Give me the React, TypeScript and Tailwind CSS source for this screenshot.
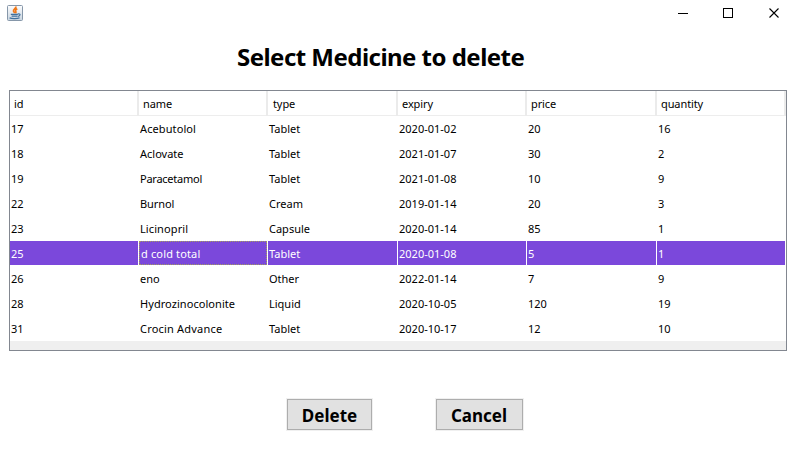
const columns = ["id", "name", "type", "expiry", "price", "quantity"];

const rows = [
  ["17", "Acebutolol", "Tablet", "2020-01-02", "20", "16"],
  ["18", "Aclovate", "Tablet", "2021-01-07", "30", "2"],
  ["19", "Paracetamol", "Tablet", "2021-01-08", "10", "9"],
  ["22", "Burnol", "Cream", "2019-01-14", "20", "3"],
  ["23", "Licinopril", "Capsule", "2020-01-14", "85", "1"],
  ["25", "d cold total", "Tablet", "2020-01-08", "5", "1"],
  ["26", "eno", "Other", "2022-01-14", "7", "9"],
  ["28", "Hydrozinocolonite", "Liquid", "2020-10-05", "120", "19"],
  ["31", "Crocin Advance", "Tablet", "2020-10-17", "12", "10"],
];

// Small spacing corrections for individual names.
const tracking: Record<string, string> = {
  Acebutolol: "tracking-[0.1px]",
  Paracetamol: "tracking-[-0.25px]",
  Burnol: "tracking-[-0.1px]",
  Licinopril: "tracking-[0.1px]",
  "d cold total": "tracking-[0.15px]",
  Hydrozinocolonite: "tracking-[0.06px]",
  "Crocin Advance": "tracking-[0.2px]",
};

const selectedId = "25";
const grid = "grid grid-cols-[129px_129px_130px_129px_130px_129px]";

function JavaIcon() {
  return (
    <svg width="16" height="16" viewBox="0 0 16 16" fill="none">
      <defs>
        <linearGradient id="tile" x1="0" y1="0" x2="0" y2="1">
          <stop offset="0" stopColor="#fdfdfe" />
          <stop offset="1" stopColor="#c9d5e0" />
        </linearGradient>
      </defs>
      <rect x="0.5" y="0.5" width="15" height="15" rx="1" fill="url(#tile)" stroke="#8697a9" />
      <path d="M9 1.5C9.2 3.4 6.2 4.2 6.5 5.8C6.6 6.8 7.6 7.2 7.6 8.2M10.3 3.8C8.6 4.8 8.2 5.6 8.8 6.4C9.2 7 9 7.6 8.5 8.2" stroke="#f07818" strokeWidth="1.7" />
      <path d="M3.8 9.3H10.8M4.6 11.2H10.4M10.8 9C13.9 8.2 13.6 10.9 10.8 11.3M2.6 12.9C5 14 10.5 13.9 12.6 12.8" stroke="#40709c" strokeWidth="1.2" />
    </svg>
  );
}

function TitleBar() {
  return (
    <header className="flex h-[26px] items-center justify-between pl-[7px] pr-[17px]">
      <JavaIcon />
      <div className="flex">
        <svg className="mr-[34px]" width="11" height="11" viewBox="0 0 11 11" shapeRendering="crispEdges">
          <path d="M0 5h10v1H0z" fill="#000" />
        </svg>
        <svg className="mr-[35px]" width="11" height="11" viewBox="0 0 11 11" shapeRendering="crispEdges">
          <path d="M0.5 0.5h9v9h-9z" fill="none" stroke="#000" />
        </svg>
        <svg width="11" height="11" viewBox="0 0 11 11">
          <path d="M0.5 0.5l9 9M9.5 0.5l-9 9" stroke="#000" strokeWidth="1.1" />
        </svg>
      </div>
    </header>
  );
}

export default function App() {
  return (
    <div className="flex h-[475px] w-[797px] flex-col overflow-hidden bg-white font-['Noto_Sans',sans-serif] text-black">
      <TitleBar />
      <h1 className="mt-[14px] h-[50px] pl-[237px] text-[24px] leading-[34px] font-bold tracking-[-0.53px]">
        Select Medicine to delete
      </h1>
      <section className="ml-[9px] h-[261px] w-[778px] border border-[#828790] bg-[#efefef]">
        <div className={`${grid} h-[25px] border-b border-[#ededed] bg-white`}>
          {columns.map((c, i) => (
            <div
              key={c}
              className={`border-r-2 border-[#ebebeb] text-[11px] leading-[25px] tracking-[-0.1px] ${
                i === 2 ? "pl-[5px]" : "pl-1"
              }`}
            >
              {c}
            </div>
          ))}
        </div>
        <div className="bg-white">
          {rows.map((r) => (
            <div key={r[0]} className={`${grid} h-[25px]`}>
              {r.map((v, i) => {
                const selected = r[0] === selectedId;
                return (
                  <div
                    key={i}
                    className={`mr-px h-6 text-[11px] whitespace-nowrap ${tracking[v] ?? ""} ${
                      selected ? "bg-[#7b48db] text-white" : ""
                    } ${selected && i === 1 ? "border border-dotted border-[#a5a05a] pl-px leading-[24px]" : "pl-px leading-[26px]"}`}
                  >
                    {v}
                  </div>
                );
              })}
            </div>
          ))}
        </div>
      </section>
      <div className="mt-[47px] flex gap-[62px] pl-[286px]">
        <button className="h-[33px] w-[87px] border border-[#f0f0f0]">
          <span className="block h-[31px] border border-[#adadad] bg-[#e1e1e1] text-[17px] leading-[32px] font-bold">Delete</span>
        </button>
        <button className="h-[33px] w-[89px] border border-[#f0f0f0]">
          <span className="block h-[31px] border border-[#adadad] bg-[#e1e1e1] pr-px text-[17px] leading-[32px] font-bold">Cancel</span>
        </button>
      </div>
    </div>
  );
}
